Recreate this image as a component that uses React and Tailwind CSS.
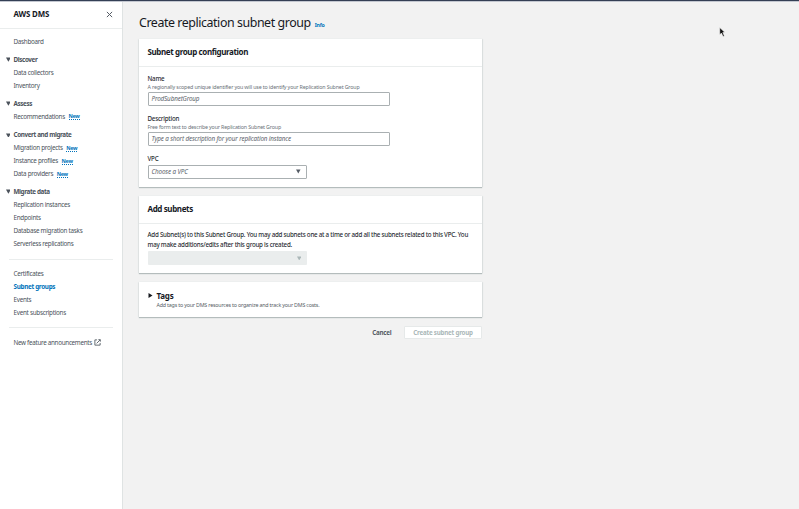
const sections = [
  {
    title: 'Discover',
    gap: 'mt-[5px]',
    items: [{ label: 'Data collectors' }, { label: 'Inventory' }],
  },
  {
    title: 'Assess',
    gap: 'mt-[5.2px]',
    items: [{ label: 'Recommendations', isNew: true }],
  },
  {
    title: 'Convert and migrate',
    gap: 'mt-[5.6px]',
    items: [
      { label: 'Migration projects', isNew: true },
      { label: 'Instance profiles', isNew: true },
      { label: 'Data providers', isNew: true },
    ],
  },
  {
    title: 'Migrate data',
    gap: 'mt-[5.4px]',
    items: [
      { label: 'Replication instances' },
      { label: 'Endpoints' },
      { label: 'Database migration tasks' },
      { label: 'Serverless replications' },
    ],
  },
];

function Triangle({ className }) {
  return (
    <svg viewBox="0 0 10 10" className={className} fill="currentColor">
      <path d="M0 1h10L5 10z" />
    </svg>
  );
}

function NavRow({ label, isNew, active }) {
  return (
    <li className="flex h-[12.85px] items-center pl-[13.5px]">
      <a className={active ? 'font-bold tracking-[-0.3px] text-[#0073bb]' : ''}>{label}</a>
      {isNew && (
        <span className="ml-[3.5px] border-b border-dotted border-[#0073bb] text-[5.3px] leading-[6px] font-bold tracking-[-0.25px] text-[#0073bb]">
          New
        </span>
      )}
    </li>
  );
}

function Sidebar() {
  return (
    <nav className="h-full w-[122.5px] shrink-0 border-r border-[#dfe3e3] bg-white text-[6.3px] leading-[8px] tracking-[-0.27px] text-[#4b525b]">
      <div className="flex h-[26.6px] items-center justify-between border-b border-[#eaeded] pr-[9px] pb-[1px] pl-[13.5px]">
        <h2 className="text-[7.9px] font-bold tracking-[-0.15px] text-[#16191f]">AWS DMS</h2>
        <svg viewBox="0 0 12 12" className="size-[7px]" stroke="#545b64" strokeWidth="1.7" fill="none">
          <path d="M1.5 1.5l9 9M10.5 1.5l-9 9" />
        </svg>
      </div>
      <ul className="mt-[7.2px]">
        <NavRow label="Dashboard" />
      </ul>
      {sections.map((s) => (
        <section key={s.title} className={s.gap}>
          <h3 className="flex h-[13px] items-center font-bold tracking-[-0.37px]">
            <Triangle className="mr-[3.2px] mb-[1px] ml-[5.5px] size-[4.8px]" />
            {s.title}
          </h3>
          <ul>
            {s.items.map((i) => (
              <NavRow key={i.label} {...i} />
            ))}
          </ul>
        </section>
      ))}
      <hr className="mx-[9px] mt-[9px] border-[#eaeded]" />
      <ul className="mt-[7.6px]">
        <NavRow label="Certificates" />
        <NavRow label="Subnet groups" active />
        <NavRow label="Events" />
        <NavRow label="Event subscriptions" />
      </ul>
      <hr className="mx-[9px] mt-[7.6px] border-[#eaeded]" />
      <div className="mt-[8.6px] flex h-[13px] items-center pl-[13.5px] tracking-[-0.3px]">
        New feature announcements
        <svg viewBox="0 0 16 16" className="ml-[2px] size-[7px]" stroke="#545b64" strokeWidth="2" fill="none">
          <path d="M7 2H2v12h12V9M10 1.5h4.5V6M14 2L6 10" />
        </svg>
      </div>
    </nav>
  );
}

function Card({ className, children }) {
  return (
    <section className={`w-[343px] bg-white shadow-[0_1px_1px_0_#b4bcbc,1px_0_1px_0_#e2e5e5,-1px_0_1px_0_#e8eaea] ${className}`}>
      {children}
    </section>
  );
}

function CardTitle({ children }) {
  return (
    <h2 className="flex h-[27.5px] items-center border-b border-[#eaeded] px-[8.5px] text-[8px] font-bold tracking-[-0.38px] text-[#16191f]">
      {children}
    </h2>
  );
}

function Label({ children }) {
  return <div className="text-[6.2px] leading-[8px] font-medium tracking-[-0.2px] text-[#2a2e34]">{children}</div>;
}

function Hint({ children }) {
  return <div className="text-[5.3px] leading-[8px] tracking-[-0.15px] text-[#687078]">{children}</div>;
}

function TextField({ children }) {
  return (
    <div className="mt-[1px] flex h-[14px] w-[242.5px] items-center rounded-[1px] border border-[#aab0b2] px-[3px] text-[6.3px] tracking-[-0.14px] text-[#5c646c] italic">
      {children}
    </div>
  );
}

export default function App() {
  return (
    <div className="flex h-[509px] w-[799px] flex-col overflow-hidden bg-[#f2f2f2] font-['Noto_Sans',sans-serif] whitespace-nowrap">
      <div className="h-[2px] shrink-0 border-b border-[#c3c7d0] bg-[#343f55]" />
      <div className="flex min-h-0 flex-1">
        <Sidebar />
        <main className="w-[360px] pl-[16.5px]">
          <h1 className="mt-[12.2px] flex h-[18px] items-center text-[12.4px] tracking-[-0.43px] text-[#16191f]">
            Create replication subnet group
            <span className="mt-[5px] ml-[4px] text-[5.2px] font-bold tracking-[-0.15px] text-[#0073bb]">Info</span>
          </h1>
          <Card className="mt-[7px] h-[148px]">
            <CardTitle>Subnet group configuration</CardTitle>
            <div className="px-[8.5px] pt-[8.1px]">
              <Label>Name</Label>
              <Hint>A regionally scoped unique identifier you will use to identify your Replication Subnet Group</Hint>
              <div className="h-[0.1px]" />
              <TextField>ProdSubnetGroup</TextField>
              <div className="h-[8.9px]" />
              <Label>Description</Label>
              <Hint>Free form text to describe your Replication Subnet Group</Hint>
              <div className="h-[0.1px]" />
              <TextField>Type a short description for your replication instance</TextField>
              <div className="h-[8.7px]" />
              <Label>VPC</Label>
              <div className="mt-[2.1px] flex h-[14px] w-[159px] items-center justify-between rounded-[1px] border border-[#aab0b2] pr-[5px] pl-[3px] text-[6.3px] tracking-[-0.14px] text-[#5c646c] italic">
                Choose a VPC
                <Triangle className="size-[4.5px] text-[#545b64]" />
              </div>
            </div>
          </Card>
          <Card className="mt-[9px] h-[77px]">
            <CardTitle>Add subnets</CardTitle>
            <div className="px-[8.5px] pt-[6.8px] text-[6.2px] leading-[9.6px] font-medium tracking-[-0.228px] text-[#2a2e34]">
              <p>Add Subnet(s) to this Subnet Group. You may add subnets one at a time or add all the subnets related to this VPC. You</p>
              <p>may make additions/edits after this group is created.</p>
              <div className="mt-[1.4px] flex h-[13.5px] w-[159px] items-center justify-end rounded-[1px] bg-[#eaeded] pr-[5.5px]">
                <Triangle className="size-[4.5px] text-[#aab7b8]" />
              </div>
            </div>
          </Card>
          <Card className="mt-[9px] h-[35px]">
            <div className="flex pt-[7.4px] pl-[9px]">
              <svg viewBox="0 0 10 10" className="mt-[3px] mr-[3.5px] size-[5px]" fill="#16191f">
                <path d="M1 0v10l8-5z" />
              </svg>
              <div className="tracking-[-0.18px]">
                <h2 className="text-[8px] leading-[11px] font-bold tracking-[-0.2px] text-[#16191f]">Tags</h2>
                <div className="text-[5.3px] leading-[8px] text-[#545b64]">
                  Add tags to your DMS resources to organize and track your DMS costs.
                </div>
              </div>
            </div>
          </Card>
          <div className="mt-[8.8px] flex h-[13.5px] w-[343px] items-center justify-end text-[6.2px] font-bold tracking-[-0.2px]">
            <span className="mr-[12.5px] text-[#545b64]">Cancel</span>
            <span className="flex h-full w-[78px] items-center justify-center rounded-[1px] border border-[#e6e9e9] bg-white text-[#aab7b8]">
              Create subnet group
            </span>
          </div>
        </main>
        <div className="relative flex-1">
          <svg viewBox="0 0 12 18" className="absolute top-[25.2px] left-[236px] h-[10px] w-[7px]">
            <path d="M1 1v13l3-3 3 6 2.500-1-3-6h4z" fill="#111" stroke="#fff" strokeWidth="1" />
          </svg>
        </div>
      </div>
    </div>
  );
}
